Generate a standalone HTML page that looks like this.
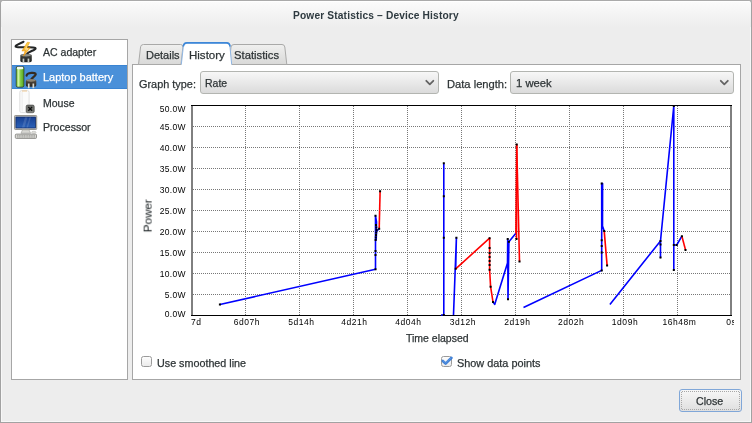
<!DOCTYPE html>
<html><head><meta charset="utf-8"><title>Power Statistics</title>
<style>
*{margin:0;padding:0;box-sizing:border-box}
html,body{width:752px;height:423px;overflow:hidden;background:#b0b0b0}
body{position:relative;font-family:"Liberation Sans",sans-serif;color:#2e3436}
#win{position:absolute;left:0;top:0;width:752px;height:423px;border:1px solid #a2a2a2;border-top-color:#aaaaaa;border-radius:4px 4px 0 0;background:#ededed;overflow:hidden;box-shadow:inset 0 0 0 1px rgba(255,255,255,0.55)}
#title{position:absolute;left:0;top:0;width:750px;height:26px;background:linear-gradient(#fbfbfb,#ededed);box-shadow:inset 0 1px 0 #fff}
.t{position:absolute;white-space:nowrap;line-height:1;-webkit-text-stroke:0.25px currentColor;will-change:transform}
#list{position:absolute;left:11px;top:39px;width:117px;height:341px;background:#fff;border:1px solid #a6a6a6}
#sel{position:absolute;left:12px;top:65px;width:115px;height:24px;background:#4a90d9;border-top:1px solid #3a84d2;border-bottom:1px solid #3a84d2}
#nb{position:absolute;left:132px;top:64px;width:609px;height:316px;background:#fff;border:1px solid #a6a6a6}
.combo{position:absolute;height:23px;border:1px solid #b3b5b1;border-radius:3px;background:linear-gradient(#f7f7f7,#dbdbdb)}
.chev{position:absolute;width:5.5px;height:5.5px;border-right:1.7px solid #5a5a5a;border-bottom:1.7px solid #5a5a5a;transform:rotate(45deg)}
.cb{position:absolute;width:11px;height:11px;border:1px solid #9a9a9a;border-radius:2.5px;background:linear-gradient(#fdfdfd,#ebebeb)}
#close{position:absolute;left:679px;top:389px;width:63px;height:23px;border:1px solid #80a7d8;border-radius:3px;background:linear-gradient(#f7f7f7,#dfdfdf)}
#close i{position:absolute;left:1px;top:1px;right:1px;bottom:1px;border:1px dashed #8a8a8a}
svg{position:absolute;left:0;top:0}
.yl{position:absolute;right:566px;font-size:8.5px;letter-spacing:0.35px;line-height:12px;white-space:nowrap;color:#000}
.xl{position:absolute;top:315.5px;font-size:8.5px;letter-spacing:0.55px;line-height:12px;white-space:nowrap;color:#000}
#clip{position:absolute;left:734px;top:310px;width:6px;height:20px;background:#fff}
</style></head><body>
<div id="win"><div id="title"></div></div>
<div class="t" id="t_title" style="left:292.7px;top:10.7px;font-size:10.2px;color:#2e3a40;font-weight:bold;-webkit-text-stroke:0;letter-spacing:0.15px">Power Statistics – Device History</div>
<div id="list"></div>
<div id="sel"></div>
<svg width="752" height="423">
<defs>
<linearGradient id="plg" x1="0" y1="0" x2="0" y2="1"><stop offset="0" stop-color="#6e706b"/><stop offset="0.35" stop-color="#3a3c38"/><stop offset="1" stop-color="#1e2020"/></linearGradient>
<linearGradient id="plb" x1="0" y1="0" x2="0" y2="1"><stop offset="0" stop-color="#8a8070"/><stop offset="0.35" stop-color="#4a4238"/><stop offset="1" stop-color="#2a2520"/></linearGradient>
<linearGradient id="bat" x1="0" y1="0" x2="1" y2="0"><stop offset="0" stop-color="#7cc444"/><stop offset="0.3" stop-color="#d4f5a8"/><stop offset="0.5" stop-color="#8ad150"/><stop offset="1" stop-color="#58a81e"/></linearGradient>
<linearGradient id="scr" x1="0" y1="0" x2="0" y2="1"><stop offset="0" stop-color="#173f92"/><stop offset="1" stop-color="#2c62b8"/></linearGradient>
<linearGradient id="bolt" x1="0" y1="0" x2="0" y2="1"><stop offset="0" stop-color="#fcd34a"/><stop offset="1" stop-color="#f5a623"/></linearGradient>
</defs>
<!-- AC adapter -->
<path d="M23.5 41.8 C20.5 43.2 16.5 44.6 15.6 46.2 C15.2 47.6 21 47.3 29 47.3 C35.5 47.3 37.5 48.2 33.5 50.2 C30.5 51.6 27.8 52.3 26.5 54.5" fill="none" stroke="#232526" stroke-width="2.1" stroke-linecap="round"/>
<path d="M20.3 55.5 Q20.3 53.8 26 53.8 Q31.8 53.8 31.8 55.5 L31.8 60.5 Q31.8 62.2 30 62.2 L22 62.2 Q20.3 62.2 20.3 60.5 Z" fill="url(#plg)"/>
<ellipse cx="26" cy="55.3" rx="4.6" ry="1.1" fill="#8d8f8a"/>
<rect x="22.6" y="58.6" width="1.7" height="4.4" fill="#c9ccc5"/>
<rect x="27.6" y="58.6" width="1.7" height="4.4" fill="#c9ccc5"/>
<path d="M27.4 42.2 L29.6 42.5 L26.9 47.7 L30.2 47.8 L23.4 56.2 L25.1 50.8 L21.9 51 Z" fill="url(#bolt)" stroke="#e89000" stroke-width="0.5" stroke-linejoin="round"/>
<path d="M27.6 44.6 L25.2 49.6 L27.4 49.2 L25.2 52.6 L28.4 48.6 L26.1 48.8 Z" fill="#fffbe8"/>
<!-- Battery -->
<rect x="15.8" y="66.2" width="8.5" height="21.2" rx="1.8" fill="#26332b"/>
<rect x="16.5" y="67" width="7.1" height="19.7" rx="1.2" fill="url(#bat)"/>
<rect x="16.8" y="66.8" width="6.5" height="2.4" rx="1.2" fill="#f4fbee"/>
<path d="M26.6 75.6 C27 72.6 35.8 72 35.7 74.3 C35.5 76.2 31.6 77.6 30.7 80.4" fill="none" stroke="#342c22" stroke-width="2.2" stroke-linecap="round"/>
<path d="M25.8 81 Q25.8 79 31 79 Q36.3 79 36.3 81 L36.3 85 Q36.3 86.8 34.6 86.8 L27.5 86.8 Q25.8 86.8 25.8 85 Z" fill="url(#plb)"/>
<ellipse cx="31" cy="80.6" rx="4.3" ry="1.1" fill="#8f8472"/>
<rect x="27.9" y="83.5" width="1.7" height="4.7" fill="#d8d8d0"/>
<rect x="32.5" y="83.5" width="1.7" height="4.7" fill="#d8d8d0"/>
<!-- Mouse (empty battery) -->
<rect x="19.8" y="90.6" width="9.3" height="22" rx="1.6" fill="#fbfbfb" stroke="#d8d8d8" stroke-width="0.8"/>
<rect x="21.5" y="91.5" width="1.4" height="20" fill="#f0f0f0"/>
<path d="M22 91 H27" stroke="#f0c080" stroke-width="0.8"/>
<rect x="26.2" y="105.1" width="8" height="7.6" rx="1.4" fill="#727470" stroke="#4a4b49" stroke-width="0.7"/>
<path d="M28.3 107 L32.1 110.8 M32.1 107 L28.3 110.8" stroke="#111" stroke-width="1.3"/>
<path d="M27 111.9 H33.4" stroke="#9a9c98" stroke-width="0.6"/>
<!-- Processor -->
<rect x="14.5" y="115.5" width="22.2" height="14" rx="0.8" fill="#dcdad2" stroke="#8d8b84" stroke-width="0.9"/>
<rect x="15.9" y="117" width="19.6" height="11" fill="url(#scr)" stroke="#0f2a66" stroke-width="0.8"/>
<path d="M25 117.3 L27.5 117.3 L24.5 127.6 L22 127.6 Z M29.5 117.3 L31 117.3 L28 127.6 L26.5 127.6 Z" fill="#ffffff" opacity="0.13"/>
<path d="M21 133.2 L22.5 129.8 L29 129.8 L30.5 133.2 Z" fill="#d8d8d4" stroke="#9a9a96" stroke-width="0.6"/>
<ellipse cx="33.8" cy="132.3" rx="2.3" ry="1" fill="#e4e4e0" stroke="#b0b0ac" stroke-width="0.5"/>
<rect x="15.3" y="134.1" width="21.2" height="4.3" rx="1" fill="#d9d9d5" stroke="#7e7e7a" stroke-width="0.8"/>
<path d="M17 135.7 H35 M17 137 H35" stroke="#8a8a86" stroke-width="0.7" stroke-dasharray="1.2,0.5"/>
</svg>

<div class="t" id="t_ac" style="left:43.4px;top:47.4px;font-size:10.52px">AC adapter</div>
<div class="t" id="t_lap" style="left:42.9px;top:72.2px;font-size:10.98px;color:#fff">Laptop battery</div>
<div class="t" id="t_mouse" style="left:42.5px;top:97.9px;font-size:10.5px">Mouse</div>
<div class="t" id="t_proc" style="left:42.5px;top:122.1px;font-size:10.58px">Processor</div>
<div id="nb"></div>
<svg width="752" height="423">
<defs>
<linearGradient id="tg" x1="0" y1="0" x2="0" y2="1"><stop offset="0" stop-color="#f0f0ef"/><stop offset="1" stop-color="#d9d9d8"/></linearGradient>
</defs>
<path d="M138.5 64.5 L140.6 46.8 Q141 44.5 143.5 44.5 L180.5 44.5 Q183 44.5 182.9 47 L181 64.5 Z" fill="url(#tg)" stroke="#a9a9a8" stroke-width="1"/>
<path d="M229 64.5 L231 47 Q231.3 44.5 234 44.5 L282 44.5 Q284.5 44.5 284.8 47 L286.8 64.5 Z" fill="url(#tg)" stroke="#a9a9a8" stroke-width="1"/>
<path d="M181.3 65.5 L183.5 45 Q183.8 42.8 186.5 42.8 L227 42.8 Q229.5 42.8 229.8 45 L231.7 65.5 Z" fill="#fff" stroke="none"/>
<path d="M181.3 64.5 L183.5 45 Q183.8 42.8 186.5 42.8 L227 42.8 Q229.5 42.8 229.8 45 L231.7 64.5" fill="none" stroke="#8fb6e3" stroke-width="1"/>
<path d="M183.3 46.5 Q183.8 42.9 187 42.9 L226.5 42.9 Q229.7 42.9 230 46.5" fill="none" stroke="#3d87d8" stroke-width="1.6"/>
</svg>
<div class="t" id="t_details" style="left:145.7px;top:49.5px;font-size:11.0px">Details</div>
<div class="t" id="t_history" style="left:188.7px;top:49.5px;font-size:11.53px">History</div>
<div class="t" id="t_stats" style="left:234.3px;top:49.5px;font-size:11.26px">Statistics</div>
<div class="t" id="t_gtype" style="left:138.9px;top:78.5px;font-size:10.9px">Graph type:</div>
<div class="combo" style="left:200px;top:71px;width:239px"></div>
<div class="t" id="t_rate" style="left:204.9px;top:78.2px;font-size:10.5px">Rate</div>

<div class="t" id="t_dlen" style="left:446.5px;top:78.5px;font-size:11.17px">Data length:</div>
<div class="combo" style="left:510px;top:71px;width:224px"></div>
<div class="t" id="t_week" style="left:516px;top:78px;font-size:11.29px">1 week</div>
<svg width="752" height="423"><path d="M426.3 80.8 L429.8 84.3 L433.3 80.8 M720.8 80.8 L724.3 84.3 L727.8 80.8" fill="none" stroke="#646464" stroke-width="1.8" stroke-linecap="round" stroke-linejoin="round"/></svg>

<svg width="752" height="423" viewBox="0 0 752 423" style="position:absolute;left:0;top:0">
<path d="M245.5 106V315 M299.5 106V315 M353.5 106V315 M407.5 106V315 M461.5 106V315 M515.5 106V315 M569.5 106V315 M623.5 106V315 M677.5 106V315" stroke="#777" stroke-width="1" stroke-dasharray="1,1" fill="none"/>
<path d="M193 294.5H730 M193 273.5H730 M193 252.5H730 M193 231.5H730 M193 210.5H730 M193 189.5H730 M193 168.5H730 M193 147.5H730 M193 126.5H730" stroke="#777" stroke-width="1" stroke-dasharray="1,1" fill="none"/>
<path d="M191 105.5H732M191 315.5H732" stroke="#000" stroke-width="1" fill="none"/>
<path d="M192 105V316M731 105V316" stroke="#000" stroke-width="1" fill="none"/>
<path d="M219.9 304.5 L375.5 269.3 L375.5 215.8 L376.5 222 L376.2 240 L376.5 231 L379.2 228.8" stroke="#0000ff" stroke-width="1.6" fill="none" stroke-linejoin="round"/>
<path d="M443.8 163.3 L443.8 315 L441 315" stroke="#0000ff" stroke-width="1.6" fill="none" stroke-linejoin="round"/>
<path d="M453.5 315 L456.4 237.7 L455.7 268.8" stroke="#0000ff" stroke-width="1.6" fill="none" stroke-linejoin="round"/>
<path d="M493 302 L494.7 304.4 L507.5 263 L507.7 238.9 L508 299.3 L508.9 241.8 L515.9 233.2" stroke="#0000ff" stroke-width="1.6" fill="none" stroke-linejoin="round"/>
<path d="M523.5 307.5 L601.7 270.4 L601.7 183.5 L602.6 183.5 L602.5 226 L604.2 230.9" stroke="#0000ff" stroke-width="1.6" fill="none" stroke-linejoin="round"/>
<path d="M609.9 304.6 L660.5 240.9 L660.5 257.5 L660.5 240.9 L673.8 106 L673.8 270.1 L673.8 245 L676.7 245 L681.9 236.2" stroke="#0000ff" stroke-width="1.6" fill="none" stroke-linejoin="round"/>
<path d="M379.2 228.8 L380.1 191.2" stroke="#ff0000" stroke-width="1.6" fill="none" stroke-linejoin="round"/>
<path d="M455.7 268.8 L489.6 238.2 L489.6 269.7 L490.6 286.7 L493 302" stroke="#ff0000" stroke-width="1.6" fill="none" stroke-linejoin="round"/>
<path d="M515.9 233.2 L516.7 144.5 L516.5 239" stroke="#ff0000" stroke-width="1.6" fill="none" stroke-linejoin="round"/>
<path d="M516.7 144.5 L519.5 261.6" stroke="#ff0000" stroke-width="1.6" fill="none" stroke-linejoin="round"/>
<path d="M604.2 230.9 L607.1 265.4" stroke="#ff0000" stroke-width="1.6" fill="none" stroke-linejoin="round"/>
<path d="M681.9 236.2 L685.5 249.9" stroke="#ff0000" stroke-width="1.6" fill="none" stroke-linejoin="round"/>
<path d="M218.9 303.5h2v2h-2z M374.5 268.3h2v2h-2z M374.5 254h2v2h-2z M374.5 250h2v2h-2z M374.6 239h2v2h-2z M374.8 236.5h2v2h-2z M375 234h2v2h-2z M375.2 231.5h2v2h-2z M375.5 229h2v2h-2z M375.3 226.5h2v2h-2z M375 224h2v2h-2z M374.5 214.8h2v2h-2z M378.2 227.8h2v2h-2z M379.1 190.2h2v2h-2z M442.8 162.3h2v2h-2z M442.8 195.2h2v2h-2z M442.8 236.7h2v2h-2z M442.8 314h2v2h-2z M455.4 236.7h2v2h-2z M454.7 267.8h2v2h-2z M488.6 237.2h2v2h-2z M488.6 247h2v2h-2z M488.6 252h2v2h-2z M488.6 256h2v2h-2z M488.6 260h2v2h-2z M488.6 264h2v2h-2z M488.6 268.7h2v2h-2z M489.6 285.7h2v2h-2z M492 301h2v2h-2z M506.7 237.9h2v2h-2z M507 298.3h2v2h-2z M507.9 240.8h2v2h-2z M515.7 143.5h2v2h-2z M515.5 238h2v2h-2z M518.5 260.6h2v2h-2z M600.7 269.4h2v2h-2z M600.7 182.5h2v2h-2z M600.7 239.3h2v2h-2z M600.7 245h2v2h-2z M600.7 251.5h2v2h-2z M603.2 229.9h2v2h-2z M606.1 264.4h2v2h-2z M659.5 239.9h2v2h-2z M659.5 243.5h2v2h-2z M659.5 256.5h2v2h-2z M672.8 105h2v2h-2z M672.8 269.1h2v2h-2z M672.8 244h2v2h-2z M675.7 244h2v2h-2z M680.9 235.2h2v2h-2z M684.5 248.9h2v2h-2z" fill="#000"/>
</svg>
<div class="yl" style="top:102.5px">50.0W</div><div class="yl" style="top:120.5px">45.0W</div><div class="yl" style="top:141.5px">40.0W</div><div class="yl" style="top:162.5px">35.0W</div><div class="yl" style="top:183.5px">30.0W</div><div class="yl" style="top:204.5px">25.0W</div><div class="yl" style="top:225.5px">20.0W</div><div class="yl" style="top:246.5px">15.0W</div><div class="yl" style="top:267.5px">10.0W</div><div class="yl" style="top:288.5px">5.0W</div><div class="yl" style="top:307.5px">0.0W</div><div class="xl" style="left:191px">7d</div><div class="xl" style="left:233.7px">6d07h</div><div class="xl" style="left:288.2px">5d14h</div><div class="xl" style="left:341.2px">4d21h</div><div class="xl" style="left:395.2px">4d04h</div><div class="xl" style="left:449.7px">3d12h</div><div class="xl" style="left:504.2px">2d19h</div><div class="xl" style="left:557.9px">2d02h</div><div class="xl" style="left:611.8px">1d09h</div><div class="xl" style="left:662.4px">16h48m</div><div class="xl" style="left:726.2px">0s</div>
<div class="t" id="t_elapsed" style="left:405.8px;top:333.5px;font-size:10.49px">Time elapsed</div>
<div class="t" id="t_power" style="left:130.7px;top:210.3px;font-size:11.6px;transform:rotate(-90deg);transform-origin:50% 50%;-webkit-text-stroke:0.1px currentColor">Power</div>
<div id="clip"></div>
<div class="cb" style="left:141px;top:356px"></div>
<div class="t" id="t_smooth" style="left:157px;top:358px;font-size:10.76px">Use smoothed line</div>
<div class="cb" style="left:441px;top:356px"></div>
<svg width="752" height="423"><path d="M442.8 361 L445.6 363.6 L451.5 357.8" fill="none" stroke="#3d7fd6" stroke-width="2.6" stroke-linecap="round" stroke-linejoin="round"/><path d="M443.3 361 L445.6 363 L451 357.9" fill="none" stroke="#7fb0ee" stroke-width="0.7" stroke-linecap="round" opacity="0.7"/></svg>
<div class="t" id="t_points" style="left:456.9px;top:358px;font-size:10.88px">Show data points</div>
<div id="close"></div><svg width="752" height="423"><path d="M682 391.5H740M682 409.5H740M681.5 392V410M739.5 392V410" fill="none" stroke="#a8a8a8" stroke-width="1" stroke-dasharray="1,1"/></svg>
<div class="t" id="t_close" style="left:696.2px;top:396.4px;font-size:10.67px">Close</div>
</body></html>
